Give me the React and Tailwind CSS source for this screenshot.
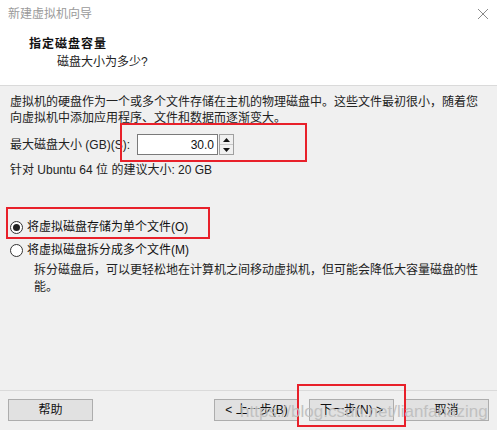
import React from 'react'

const font = { fontFamily: '"Liberation Sans", "Noto Sans CJK SC", sans-serif' }

function Radio({ checked, children }) {
    return (
        <div className="flex items-center h-[18px]">
            <span className="w-[13px] h-[13px] rounded-full border border-[#333] bg-white flex items-center justify-center">
                {checked && <span className="w-[7px] h-[7px] rounded-full bg-[#222]" />}
            </span>
            <span className="ml-[4px] text-[12px] text-[#111]">{children}</span>
        </div>
    )
}

function Btn({ children, className = '' }) {
    return (
        <div className={"h-[22px] w-[85px] bg-[#e1e1e1] border border-[#adadad] flex items-center justify-center text-[12px] text-[#111] " + className}>
            {children}
        </div>
    )
}

export default function App() {
    return (
        <div className="relative w-[497px] h-[430px] bg-[#f0f0f0] overflow-hidden flex flex-col" style={font}>
            {/* header */}
            <div className="bg-white h-[86px] border-b border-[#dadada] shrink-0">
                <div className="h-[28px] flex items-center justify-between pl-[8px] pr-[6px]">
                    <span className="text-[12px] text-[#9a9a9a]">新建虚拟机向导</span>
                    <svg width="12" height="12" viewBox="0 0 12 12" className="mr-[2px]">
                        <path d="M1 1 L11 11 M11 1 L1 11" stroke="#8a8a8a" strokeWidth="1" />
                    </svg>
                </div>
                <div className="pl-[29px] mt-[8px] text-[12px] font-bold leading-[16px] tracking-[1px] text-[#111]">指定磁盘容量</div>
                <div className="pl-[57px] mt-[2px] text-[12px] leading-[16px] text-[#222]">磁盘大小为多少?</div>
            </div>

            {/* body */}
            <div className="px-[10px] flex-1 flex flex-col">
                <p className="mt-[8px] text-[12px] leading-[16px] text-[#222]">
                    虚拟机的硬盘作为一个或多个文件存储在主机的物理磁盘中。这些文件最初很小，随着您<br />
                    向虚拟机中添加应用程序、文件和数据而逐渐变大。
                </p>

                <div className="mt-[8px] flex items-center h-[21px]">
                    <span className="text-[12px] text-[#222] w-[127px]">最大磁盘大小 (GB)(S):</span>
                    <div className="w-[81px] h-[21px] bg-white border border-[#7a7a7a] flex items-center justify-end pr-[3px] text-[12px] text-[#111]">30.0</div>
                    <div className="ml-[1px] w-[15px] h-[21px] flex flex-col border border-[#a0a0a0] bg-[#f0f0f0]">
                        <div className="flex-1 flex items-center justify-center border-b border-[#c8c8c8]">
                            <svg width="7" height="4" viewBox="0 0 7 4"><path d="M0 4 L3.5 0 L7 4 Z" fill="#111" /></svg>
                        </div>
                        <div className="flex-1 flex items-center justify-center">
                            <svg width="7" height="4" viewBox="0 0 7 4"><path d="M0 0 L3.5 4 L7 0 Z" fill="#111" /></svg>
                        </div>
                    </div>
                </div>

                <div className="mt-[7px] text-[12px] leading-[16px] text-[#222]">针对 Ubuntu 64 位 的建议大小: 20 GB</div>

                <div className="mt-[40px] flex flex-col gap-[5px]">
                    <Radio checked>将虚拟磁盘存储为单个文件(O)</Radio>
                    <Radio>将虚拟磁盘拆分成多个文件(M)</Radio>
                </div>
                <p className="pl-[24px] mt-[3px] text-[12px] leading-[17px] text-[#222]">
                    拆分磁盘后，可以更轻松地在计算机之间移动虚拟机，但可能会降低大容量磁盘的性<br />
                    能。
                </p>
            </div>

            {/* footer */}
            <div className="h-[40px] border-t border-[#dadada] shrink-0 flex items-start pt-[8px] px-[8px]">
                <Btn>帮助</Btn>
                <div className="flex-1" />
                <Btn>&lt; 上一步(B)</Btn>
                <Btn className="ml-[10px]">下一步(N) &gt;</Btn>
                <Btn className="ml-[10px]">取消</Btn>
            </div>

            {/* annotation boxes */}
            <div className="absolute left-[120px] top-[123px] w-[187px] h-[39px] border-2 border-[#e8202a]" />
            <div className="absolute left-[6px] top-[207px] w-[204px] h-[32px] border-2 border-[#e8202a]" />
            <div className="absolute left-[297px] top-[384px] w-[109px] h-[43px] border-2 border-[#e8202a]" />

            {/* watermark */}
            <div className="absolute left-[240px] top-[401px] text-[17px] leading-[22px] text-[#bdbdbd] opacity-90 whitespace-nowrap" style={{ fontFamily: '"Liberation Sans", sans-serif' }}>
                https://blog.csdn.net/lianfanazing
            </div>
        </div>
    )
}
